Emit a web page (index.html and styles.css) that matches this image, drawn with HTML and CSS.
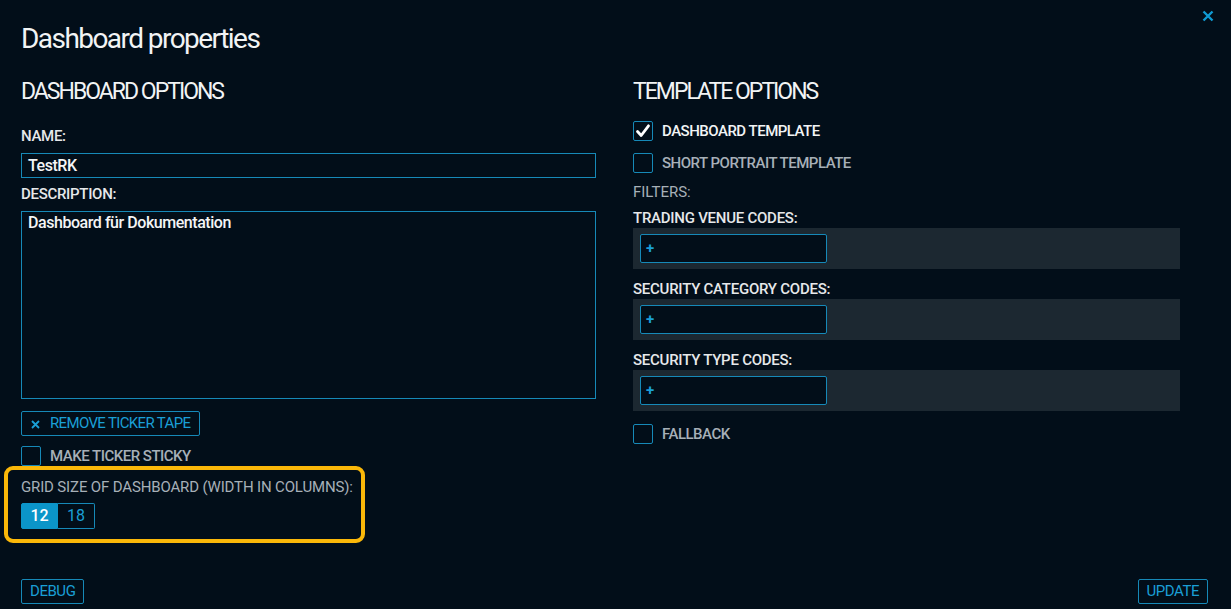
FILE: index.html
```html
<!DOCTYPE html>
<html>
<head>
<meta charset="utf-8">
<link rel="stylesheet" href="styles.css">
</head>
<body>
<div class="dialog">
  <button class="close" aria-label="close">
    <svg width="12" height="12" viewBox="0 0 12 12"><path d="M1.5 1.5 L10.5 10.5 M10.5 1.5 L1.5 10.5" stroke="#0f9ad2" stroke-width="2.4" fill="none"/></svg>
  </button>
  <h1 class="title">Dashboard properties</h1>
  <div class="columns">
    <section class="col left">
      <h2 class="section-title">DASHBOARD OPTIONS</h2>
      <label class="field-label">NAME:</label>
      <div class="input name-input">TestRK</div>
      <label class="field-label desc-label">DESCRIPTION:</label>
      <div class="input textarea">Dashboard für Dokumentation</div>
      <button class="btn remove-btn"><svg class="x" width="9" height="9" viewBox="0 0 9 9"><path d="M1 1 L8 8 M8 1 L1 8" stroke="#1a9fd6" stroke-width="1.8" fill="none"/></svg>REMOVE TICKER TAPE</button>
      <div class="check-row sticky-row"><span class="box"></span><span class="check-label">MAKE TICKER STICKY</span></div>
      <div class="highlight">
        <div class="grid-label">GRID SIZE OF DASHBOARD (WIDTH IN COLUMNS):</div>
        <div class="segmented">
          <span class="seg active">12</span><span class="seg">18</span>
        </div>
      </div>
    </section>
    <section class="col right">
      <h2 class="section-title">TEMPLATE OPTIONS</h2>
      <div class="check-row first-check"><span class="box"><svg width="16" height="16" viewBox="0 0 16 16"><path d="M2.5 8.5 L6.2 12.5 L13.5 2.8" stroke="#fff" stroke-width="2.8" fill="none" stroke-linecap="round" stroke-linejoin="round"/></svg></span><span class="check-label on">DASHBOARD TEMPLATE</span></div>
      <div class="check-row"><span class="box"></span><span class="check-label">SHORT PORTRAIT TEMPLATE</span></div>
      <div class="filters-label">FILTERS:</div>
      <label class="code-label">TRADING VENUE CODES:</label>
      <div class="code-panel"><div class="code-input">+</div></div>
      <label class="code-label">SECURITY CATEGORY CODES:</label>
      <div class="code-panel"><div class="code-input">+</div></div>
      <label class="code-label">SECURITY TYPE CODES:</label>
      <div class="code-panel"><div class="code-input">+</div></div>
      <div class="check-row fallback-row"><span class="box"></span><span class="check-label">FALLBACK</span></div>
    </section>
  </div>
  <footer class="footer">
    <button class="btn">DEBUG</button>
    <button class="btn">UPDATE</button>
  </footer>
</div>
</body>
</html>
```
FILE: styles.css
```css
* { box-sizing: border-box; }
html, body { margin: 0; height: 100%; }
body {
  background: #020e19;
  color: #e8eaec;
  font-family: Roboto, "Liberation Sans", sans-serif;
}
.dialog {
  position: relative;
  height: 609px;
  padding: 0 23px 5px 21px;
  display: flex;
  flex-direction: column;
}
.close {
  position: absolute;
  top: 10px;
  right: 17px;
  background: none;
  border: 0;
  padding: 0;
  width: 12px;
  height: 12px;
  display: flex;
}
.title {
  margin: 21px 0 0;
  font-size: 28px;
  line-height: 36px;
  font-weight: 400;
  letter-spacing: -1.55px;
  color: #f2f4f5;
}
.columns {
  display: grid;
  grid-template-columns: 575px 547px;
  column-gap: 37px;
  margin-top: 21px;
}
.section-title {
  margin: 0;
  font-size: 23px;
  line-height: 28px;
  font-weight: 400;
  letter-spacing: -2px;
  color: #f2f4f5;
}
.field-label {
  display: block;
  margin-top: 21px;
  font-size: 15px;
  line-height: 18px;
  font-weight: 500;
  letter-spacing: -0.3px;
  color: #e6e8ea;
}
.desc-label { margin-top: 7px; }
.input {
  border: 1px solid #1689b8;
  margin-top: 8px;
  padding: 0 6px;
  font-size: 16px;
  font-weight: 500;
  letter-spacing: -0.45px;
  color: #f4f5f6;
}
.name-input { height: 25px; line-height: 23px; }
.textarea { height: 188px; padding-top: 1px; line-height: 20px; }
.btn {
  background: none;
  border: 1px solid #1689b8;
  border-radius: 2px;
  color: #1a9fd6;
  font-family: Roboto, "Liberation Sans", sans-serif;
  font-size: 15px;
  letter-spacing: -0.45px;
  height: 25px;
  padding: 0 8px;
  line-height: 23px;
  white-space: nowrap;
}
.remove-btn {
  align-self: flex-start;
  margin-top: 12px;
  width: 179px;
  text-align: left;
  padding: 0 6px 0 9px;
  letter-spacing: -0.65px;
}
.left { display: flex; flex-direction: column; }
.x { margin-right: 10px; vertical-align: -0.5px; }
.check-row {
  display: flex;
  align-items: center;
  height: 20px;
  margin-top: 12px;
}
.sticky-row { margin-top: 10px; }
.box {
  width: 20px;
  height: 20px;
  border: 1px solid #1689b8;
  border-radius: 2px;
  display: flex;
  align-items: center;
  justify-content: center;
  flex: none;
}
.check-label {
  margin-left: 9px;
  font-size: 15px;
  font-weight: 500;
  letter-spacing: -0.5px;
  color: #a7b0b8;
  white-space: nowrap;
}
.check-label.on { color: #f2f4f5; }
.highlight {
  margin: 0 0 0 -17px;
  width: 361px;
  height: 77px;
  border: 4px solid #fbb809;
  border-radius: 9px;
  padding: 8px 5px 0 13px;
}
.grid-label {
  font-size: 15px;
  line-height: 18px;
  letter-spacing: -0.15px;
  color: #a7b0b8;
  white-space: nowrap;
}
.segmented {
  display: flex;
  margin-top: 7px;
}
.seg {
  width: 37px;
  height: 26px;
  line-height: 24px;
  text-align: center;
  border: 1px solid #1689b8;
  font-size: 16px;
  color: #1a9fd6;
}
.seg.active {
  background: #0b95c9;
  border-color: #0b95c9;
  color: #ffffff;
  font-weight: 500;
  border-radius: 2px 0 0 2px;
}
.seg + .seg { border-left: 0; border-radius: 0 2px 2px 0; }
.first-check { margin-top: 15px; }
.filters-label {
  margin-top: 10px;
  font-size: 15px;
  line-height: 18px;
  color: #a7b0b8;
}
.code-label {
  display: block;
  margin-top: 9px;
  font-size: 15px;
  line-height: 17px;
  font-weight: 500;
  letter-spacing: -0.25px;
  color: #e6e8ea;
}
.code-panel + .code-label { margin-top: 12px; }
.code-panel {
  margin-top: 1px;
  background: #1c2831;
  height: 41px;
  padding: 6px 7px;
}
.code-input {
  width: 187px;
  height: 29px;
  border: 1px solid #1689b8;
  border-radius: 2px;
  background: #020e19;
  color: #1a9fd6;
  font-size: 15px;
  font-weight: 700;
  line-height: 26px;
  padding-left: 5px;
}
.fallback-row { margin-top: 13px; }
.footer {
  margin-top: auto;
  display: flex;
  justify-content: space-between;
}
```
